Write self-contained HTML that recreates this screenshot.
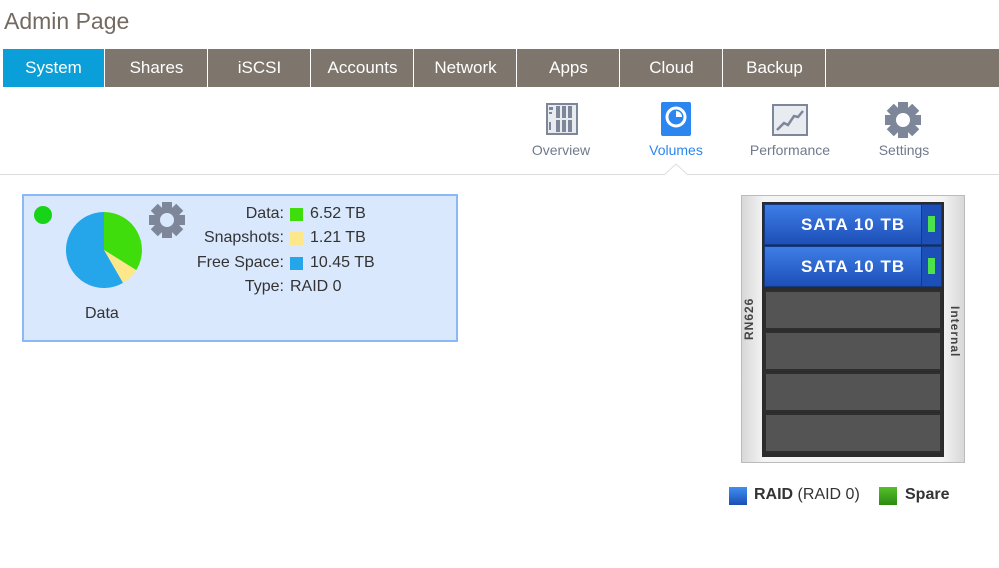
<!DOCTYPE html>
<html><head><style>
*{margin:0;padding:0;box-sizing:border-box}
body{width:999px;height:568px;background:#fff;font-family:"Liberation Sans",sans-serif;position:relative;overflow:hidden}
.abs{position:absolute}
h1{position:absolute;left:4px;top:8px;font-size:23px;font-weight:normal;color:#736a61}
.tabs{position:absolute;left:3px;top:49px;height:38px;width:996px;background:#7e756c}
.tab{position:absolute;top:0;height:38px;width:102px;color:#fff;font-size:17px;text-align:center;line-height:38px;border-right:1px solid #fff}
.sub{position:absolute;top:142px;font-size:14px;color:#6f7a8c;text-align:center;width:100px}
.lbl{position:absolute;font-size:16px;color:#333;text-align:right;width:200px}
.val{position:absolute;font-size:16px;color:#333}
.sw{position:absolute;width:13px;height:13px}
.bay{position:absolute;left:764px;width:178px;height:40px;background:#545454;border:2px solid #2e2e2e}
.disk{position:absolute;left:764px;width:178px;height:41px;background:linear-gradient(#3d7ee6,#1d4fb8);border:1px solid #163a80;color:#fff;font-weight:bold;font-size:17px;line-height:40px;letter-spacing:1px}
.led{position:absolute;right:0;top:0;width:20px;height:39px;background:#1d4fb8;border-left:1px solid #163a80}
.led i{position:absolute;left:6px;top:11px;width:7px;height:16px;background:#4be24b}
</style></head><body>
<h1>Admin Page</h1>
<div class="tabs">
<div class="tab" style="left:0;background:#0a9fd8">System</div>
<div class="tab" style="left:103px">Shares</div>
<div class="tab" style="left:206px">iSCSI</div>
<div class="tab" style="left:309px">Accounts</div>
<div class="tab" style="left:412px">Network</div>
<div class="tab" style="left:515px">Apps</div>
<div class="tab" style="left:618px">Cloud</div>
<div class="tab" style="left:721px">Backup</div>
</div>
<svg class="abs" style="left:545px;top:102px" width="34" height="34"><rect x="1" y="1" width="32" height="32" fill="#7d8799"/><rect x="3" y="3" width="28" height="28" fill="#e8ebf0"/><g fill="#7d8799"><rect x="11" y="4" width="4" height="12"/><rect x="17" y="4" width="4" height="12"/><rect x="23" y="4" width="4" height="12"/><rect x="11" y="18" width="4" height="12"/><rect x="17" y="18" width="4" height="12"/><rect x="23" y="18" width="4" height="12"/><rect x="4" y="5" width="4" height="3"/><rect x="4" y="10" width="3" height="2"/><rect x="4" y="20" width="2" height="8"/></g></svg>
<div class="sub" style="left:511px">Overview</div>
<svg class="abs" style="left:661px;top:102px" width="30" height="34"><rect width="30" height="34" rx="2" fill="#2c86f0"/><circle cx="15" cy="15" r="9" fill="none" stroke="#fff" stroke-width="3"/><path d="M15 15V9A6 6 0 0 1 21 15Z" fill="#fff"/></svg>
<div class="sub" style="left:626px;color:#2c86f0">Volumes</div>
<svg class="abs" style="left:772px;top:104px" width="36" height="32"><rect x="1" y="1" width="34" height="30" fill="#e8ebf0" stroke="#7d8799" stroke-width="2"/><path d="M5 26L12 19L16 21L22 12L26 13L31 7" fill="none" stroke="#7d8799" stroke-width="2.5"/></svg>
<div class="sub" style="left:740px">Performance</div>
<svg class="abs" style="left:885px;top:102px" width="36" height="36" viewBox="-18 -18 36 36"><g fill="#7d8799"><circle r="13"/><rect x="-5" y="-18" width="10" height="8"/><rect x="-5" y="-18" width="10" height="8" transform="rotate(45)"/><rect x="-5" y="-18" width="10" height="8" transform="rotate(90)"/><rect x="-5" y="-18" width="10" height="8" transform="rotate(135)"/><rect x="-5" y="-18" width="10" height="8" transform="rotate(180)"/><rect x="-5" y="-18" width="10" height="8" transform="rotate(225)"/><rect x="-5" y="-18" width="10" height="8" transform="rotate(270)"/><rect x="-5" y="-18" width="10" height="8" transform="rotate(315)"/></g><circle r="7" fill="#fff"/></svg>
<div class="sub" style="left:854px">Settings</div>
<div class="abs" style="left:0;top:174px;width:999px;height:1px;background:#ddd"></div>
<svg class="abs" style="left:664px;top:163px" width="24" height="13"><path d="M0 12L12 1L24 12" fill="#fff" stroke="#ddd"/></svg>
<div class="abs" style="left:22px;top:194px;width:436px;height:148px;background:#d9e8fd;border:2px solid #8cb8f3"></div>
<div class="abs" style="left:34px;top:206px;width:18px;height:18px;border-radius:50%;background:#18d418"></div>
<svg class="abs" style="left:0;top:0" width="200" height="320"><path d="M104 250V212A38 38 0 0 1 136.2 270.1Z" fill="#3fdd0c"/><path d="M104 250L136.2 270.1A38 38 0 0 1 123 282.9Z" fill="#fce88a"/><path d="M104 250L123 282.9A38 38 0 1 1 104 212Z" fill="#25a5ea"/></svg>
<svg class="abs" style="left:149px;top:202px" width="36" height="36" viewBox="-18 -18 36 36"><g fill="#7d8799"><circle r="13"/><rect x="-5" y="-18" width="10" height="8"/><rect x="-5" y="-18" width="10" height="8" transform="rotate(45)"/><rect x="-5" y="-18" width="10" height="8" transform="rotate(90)"/><rect x="-5" y="-18" width="10" height="8" transform="rotate(135)"/><rect x="-5" y="-18" width="10" height="8" transform="rotate(180)"/><rect x="-5" y="-18" width="10" height="8" transform="rotate(225)"/><rect x="-5" y="-18" width="10" height="8" transform="rotate(270)"/><rect x="-5" y="-18" width="10" height="8" transform="rotate(315)"/></g><circle r="7" fill="#d9e8fd"/></svg>
<div class="abs" style="left:85px;top:305px;font-size:16px;color:#333">Data</div>
<div class="lbl" style="left:84px;top:205px">Data:</div>
<div class="lbl" style="left:84px;top:229px">Snapshots:</div>
<div class="lbl" style="left:84px;top:254px">Free Space:</div>
<div class="lbl" style="left:84px;top:278px">Type:</div>
<div class="sw" style="left:290px;top:208px;background:#3fdd0c"></div>
<div class="sw" style="left:290px;top:232px;background:#fce88a"></div>
<div class="sw" style="left:290px;top:257px;background:#25a5ea"></div>
<div class="val" style="left:310px;top:205px">6.52 TB</div>
<div class="val" style="left:310px;top:229px">1.21 TB</div>
<div class="val" style="left:310px;top:254px">10.45 TB</div>
<div class="val" style="left:290px;top:278px">RAID 0</div>
<div class="abs" style="left:741px;top:195px;width:224px;height:268px;background:linear-gradient(90deg,#d8d8d8,#f4f4f4 10%,#f4f4f4 90%,#d8d8d8);border:1px solid #bbb"></div>
<div class="abs" style="left:762px;top:202px;width:182px;height:255px;background:#2b2b2b"></div>
<div class="disk" style="top:204px"><span style="position:absolute;left:36px">SATA 10 TB</span><div class="led"><i></i></div></div>
<div class="disk" style="top:246px"><span style="position:absolute;left:36px">SATA 10 TB</span><div class="led"><i></i></div></div>
<div class="bay" style="top:290px"></div>
<div class="bay" style="top:331px"></div>
<div class="bay" style="top:372px"></div>
<div class="bay" style="top:413px"></div>
<div class="abs" style="left:742px;top:340px;transform:rotate(-90deg);transform-origin:left top;font-size:12px;font-weight:bold;color:#444;letter-spacing:1px;width:60px">RN626</div>
<div class="abs" style="left:962px;top:306px;transform:rotate(90deg);transform-origin:left top;font-size:12px;font-weight:bold;color:#444;letter-spacing:1px;width:60px">Internal</div>
<div class="abs" style="left:729px;top:487px;width:18px;height:18px;background:linear-gradient(#3f8ff0,#1a4fb5)"></div>
<div class="abs" style="left:754px;top:486px;font-size:16px;color:#333"><b>RAID</b> (RAID 0)</div>
<div class="abs" style="left:879px;top:487px;width:18px;height:18px;background:linear-gradient(#55c02a,#2a8a12)"></div>
<div class="abs" style="left:905px;top:486px;font-size:16px;color:#333;font-weight:bold">Spare</div>
</body></html>
